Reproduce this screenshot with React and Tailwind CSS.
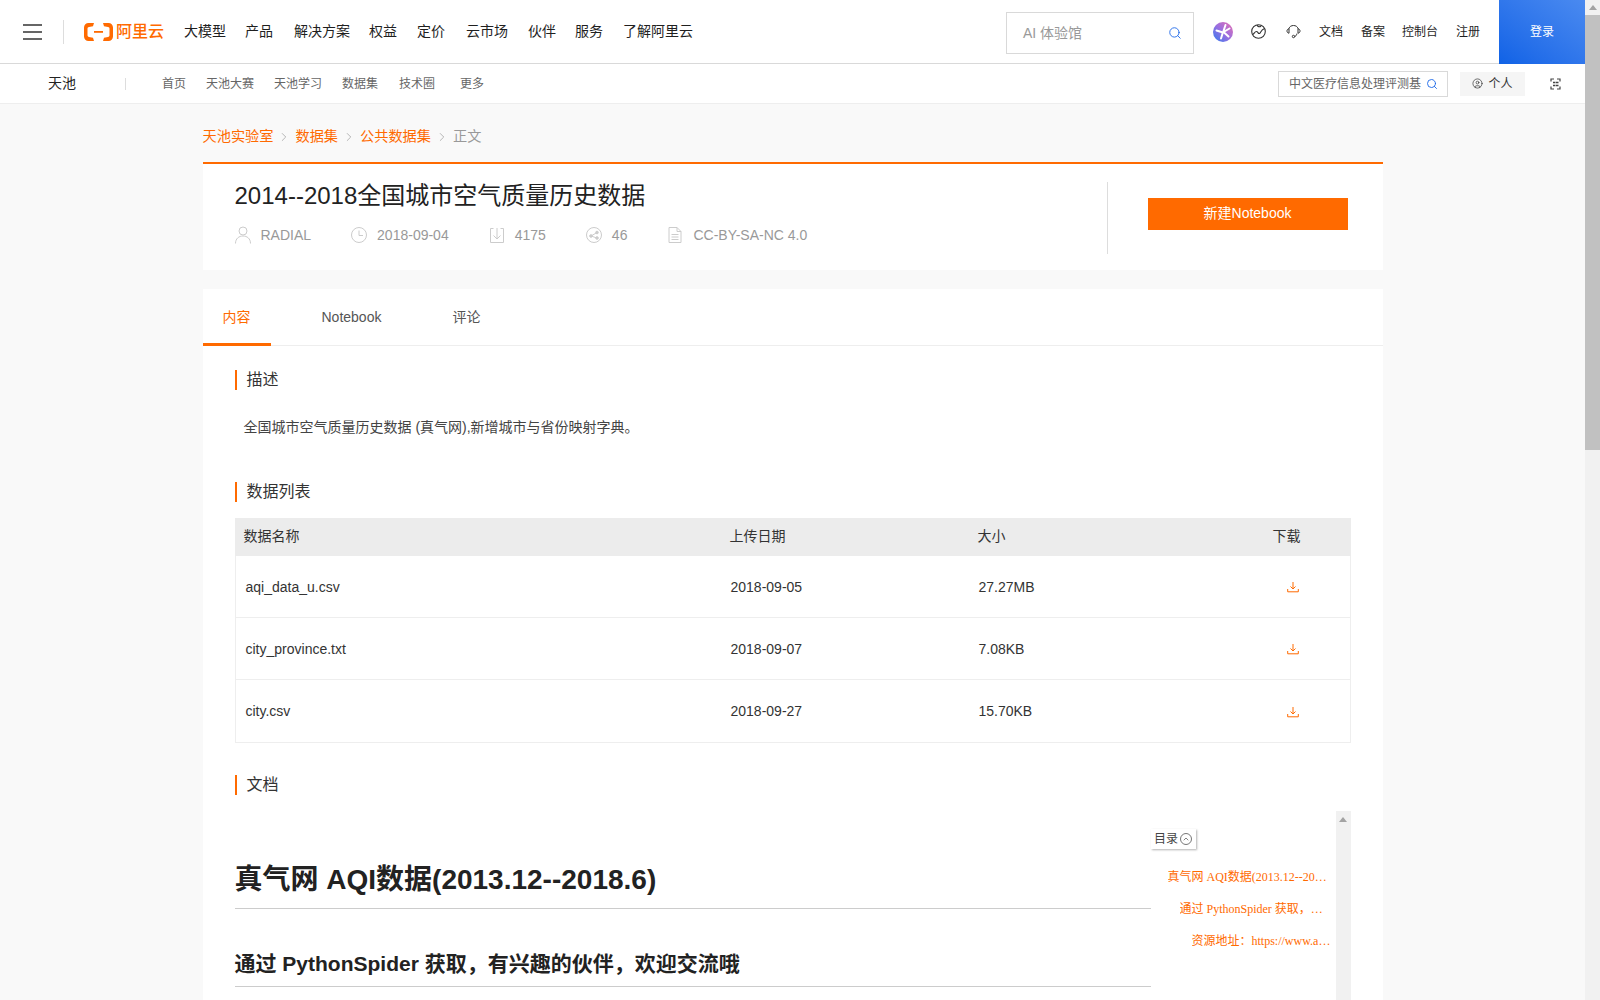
import React from 'react';
import { Search, ChevronRight, ChevronUp, CircleUser } from 'lucide-react';

const topNav = [
  { name: '大模型', cls: 'ml-[20px]' },
  { name: '产品', cls: 'ml-[19px]' },
  { name: '解决方案', cls: 'ml-[21px]' },
  { name: '权益', cls: 'ml-[19px]' },
  { name: '定价', cls: 'ml-[20px]' },
  { name: '云市场', cls: 'ml-[21px]' },
  { name: '伙伴', cls: 'ml-[20px]' },
  { name: '服务', cls: 'ml-[19px]' },
  { name: '了解阿里云', cls: 'ml-[20px]' },
];

const subNav = [
  { name: '首页', cls: 'ml-[36px]' },
  { name: '天池大赛', cls: 'ml-[20px]' },
  { name: '天池学习', cls: 'ml-[20px]' },
  { name: '数据集', cls: 'ml-[20px]' },
  { name: '技术圈', cls: 'ml-[21px]' },
  { name: '更多', cls: 'ml-[25px]' },
];

const files = [
  { name: 'aqi_data_u.csv', date: '2018-09-05', size: '27.27MB' },
  { name: 'city_province.txt', date: '2018-09-07', size: '7.08KB' },
  { name: 'city.csv', date: '2018-09-27', size: '15.70KB' },
];

function Logo() {
  return (
    <div className="flex items-center ml-[20px] w-[80px] whitespace-nowrap">
      <svg width="29" height="18" viewBox="0 0 29 18" fill="#ff6a00" className="shrink-0">
        <path d="M10 0H4.500C2 0 0 2 0 4.500V13.500C0 16 2 18 4.500 18H10L9 14.800L5 14C4 13.700 3.500 13.200 3.500 12.300V5.700C3.500 4.800 4 4.300 5 4L9 3.200Z" />
        <path d="M19 0H24.500C27 0 29 2 29 4.500V13.500C29 16 27 18 24.500 18H19L20 14.800L24 14C25 13.700 25.500 13.200 25.500 12.300V5.700C25.500 4.800 25 4.300 24 4L20 3.200Z" />
        <rect x="10" y="8" width="9" height="1.800" />
      </svg>
      <span className="ml-[3px] text-[16px] leading-none font-medium text-[#ff6a00]">阿里云</span>
    </div>
  );
}

function TopBar() {
  return (
    <header className="h-[64px] bg-white border-b border-[#d9d9d9] flex items-center text-[14px] text-[#1f1f1f]">
      <div className="ml-[23px] w-[19px] flex flex-col gap-[5px]">
        <div className="h-[2px] bg-[#666]" />
        <div className="h-[2px] bg-[#666]" />
        <div className="h-[2px] bg-[#666]" />
      </div>
      <div className="ml-[21px] w-px h-[24px] bg-[#ddd]" />
      <Logo />
      {topNav.map((item) => (
        <span key={item.name} className={item.cls}>{item.name}</span>
      ))}
      <div className="ml-auto w-[188px] h-[42px] mt-[3px] border border-[#d9d9d9] flex items-center pl-[16px] pr-[11px] text-[#999]">
        <span>AI 体验馆</span>
        <Search className="ml-auto w-[14px] h-[14px] text-[#1a66e8]" strokeWidth={1.5} />
      </div>
      <svg className="ml-[19px]" width="20" height="20" viewBox="0 0 20 20">
        <defs>
          <linearGradient id="star" x1="1" y1="0" x2="0" y2="1">
            <stop offset="0" stopColor="#e86fb0" />
            <stop offset="0.5" stopColor="#9a6fe0" />
            <stop offset="1" stopColor="#2f7bf0" />
          </linearGradient>
        </defs>
        <circle cx="10" cy="10" r="10" fill="url(#star)" />
        <path d="M12.500 3L10.500 9M3.500 8.500L10 10.500M10.500 10L16.500 6.500M10.500 10L15.500 14.500M10 10L8 16.500" stroke="#fff" strokeWidth="2" strokeLinecap="round" fill="none" />
      </svg>
      <svg className="ml-[18px]" width="15" height="15" viewBox="0 0 15 15" fill="none" stroke="#333" strokeWidth="1.100">
        <circle cx="7.500" cy="7.500" r="6.800" />
        <path d="M1.500 10.500C3 10.500 3.500 7.500 5.500 7.500C7 7.500 7 10 8.500 9.500C10 9 9.500 6 13.500 4.500M6 1C6.500 2.500 8.500 3.500 10 2" />
      </svg>
      <svg className="ml-[20px]" width="15" height="15" viewBox="0 0 15 15" fill="none" stroke="#333" strokeWidth="1">
        <path d="M3 5V4.500C3.500 2.500 5.500 1.500 7.500 1.500C9.500 1.500 11.500 2.500 12 4.500V5" />
        <path d="M3 4.800C1.500 5 1 6 1 7C1 8 1.500 9 3 9.200ZM12 4.800C13.500 5 14 6 14 7C14 8 13.500 9 12 9.200Z" />
        <path d="M11 9.500C10.500 11.500 9.500 12.500 8.500 12.500" />
        <circle cx="7.500" cy="12.500" r="1.200" />
      </svg>
      <span className="ml-[18px] text-[12px]">文档</span>
      <span className="ml-[18px] text-[12px]">备案</span>
      <span className="ml-[17px] text-[12px]">控制台</span>
      <span className="ml-[18px] text-[12px]">注册</span>
      <div className="ml-[19px] w-[86px] h-[64px] self-start bg-gradient-to-tr from-[#0f62e6] to-[#4a8af0] text-white text-[12px] flex items-center justify-center">登录</div>
    </header>
  );
}

function SubBar() {
  return (
    <div className="h-[40px] bg-white border-b border-[#eee] flex items-center text-[12px] text-[#666]">
      <span className="ml-[48px] text-[14px] text-[#222]">天池</span>
      <div className="ml-[49px] w-px h-[12px] bg-[#ddd]" />
      {subNav.map((item) => (
        <span key={item.name} className={item.cls}>{item.name}</span>
      ))}
      <div className="ml-auto w-[170px] h-[26px] border border-[#d9d9d9] flex items-center pl-[10px] pr-[9px]">
        <span className="w-[132px] whitespace-nowrap overflow-hidden">中文医疗信息处理评测基</span>
        <Search className="ml-auto w-[12px] h-[12px] text-[#1a66e8] shrink-0" strokeWidth={1.8} />
      </div>
      <div className="ml-[12px] w-[65px] h-[24px] bg-[#f5f5f5] flex items-center justify-center gap-[5px] text-[#333]">
        <CircleUser className="w-[11px] h-[11px]" strokeWidth={1.5} />
        <span>个人</span>
      </div>
      <svg className="ml-[25px] mr-[24px]" width="11" height="12" viewBox="0 0 11 12" fill="none" stroke="#444" strokeWidth="1.200">
        <path d="M1 3.500V1H4M7 1H10V3.500M10 8.500V11H7M4 11H1V8.500" />
        <path d="M3 4.500H5.500M6 4.500H8.500M3 7.500H5.500M6 7.500H8.500" strokeWidth="1.500" />
      </svg>
    </div>
  );
}

function Crumbs() {
  const sep = <ChevronRight className="mx-[4px] w-[14px] h-[14px] text-[#999]" strokeWidth={1.2} />;
  return (
    <div className="h-[58px] pt-[8px] flex items-center text-[14.2px] text-[#ff6a00]">
      <span>天池实验室</span>
      {sep}
      <span>数据集</span>
      {sep}
      <span>公共数据集</span>
      {sep}
      <span className="text-[#999]">正文</span>
    </div>
  );
}

function UserIcon() {
  return (
    <svg width="16" height="18" viewBox="0 0 16 18" fill="none" stroke="#ccc" strokeWidth="1">
      <circle cx="8" cy="5" r="4" />
      <path d="M0.500 17.500C0.500 12.500 4 10 8 10C12 10 15.500 12.500 15.500 17.500" />
    </svg>
  );
}

function ClockIcon() {
  return (
    <svg width="16" height="16" viewBox="0 0 16 16" fill="none" stroke="#ccc" strokeWidth="1">
      <circle cx="8" cy="8" r="7.500" />
      <path d="M8 3.500V8.500H12" />
    </svg>
  );
}

function BoxDownIcon() {
  return (
    <svg width="16" height="16" viewBox="0 0 16 16" fill="none" stroke="#ccc" strokeWidth="1">
      <path d="M4.500 1.500H1.500V15.500H14.500V1.500H11.500" />
      <path d="M8 1V12M4.500 8.500L8 12L11.500 8.500" />
    </svg>
  );
}

function ShareIcon() {
  return (
    <svg width="16" height="16" viewBox="0 0 16 16" fill="none" stroke="#ccc" strokeWidth="1">
      <circle cx="8" cy="8" r="7.500" />
      <circle cx="5" cy="9" r="1.300" fill="#ccc" />
      <circle cx="11" cy="5.500" r="1.300" fill="#ccc" />
      <circle cx="11" cy="11" r="1.300" fill="#ccc" />
      <path d="M5 9L11 5.500M5 9L11 11" />
    </svg>
  );
}

function DocIcon() {
  return (
    <svg width="16" height="16" viewBox="0 0 16 16" fill="none" stroke="#ccc" strokeWidth="1">
      <path d="M2 0.500H10L14 4.500V15.500H2Z" />
      <path d="M10 0.500V4.500H14M4.500 7.500H11.500M4.500 10H11.500M4.500 12.500H11.500" />
    </svg>
  );
}

function MetaItem({ icon, text, cls }) {
  return (
    <div className={`flex items-center gap-[10px] ${cls}`}>
      {icon}
      <span>{text}</span>
    </div>
  );
}

function TitleCard() {
  return (
    <div className="h-[108px] bg-white border-t-2 border-[#ff6a00] flex">
      <div className="ml-[32px] w-[872px] h-[71px] mt-[18px]">
        <h1 className="text-[24px] leading-[28px] text-[#222] font-normal">2014--2018全国城市空气质量历史数据</h1>
        <div className="mt-[15px] flex items-center text-[14px] leading-[20px] text-[#999]">
          <MetaItem icon={<UserIcon />} text="RADIAL" cls="" />
          <MetaItem icon={<ClockIcon />} text="2018-09-04" cls="ml-[40px]" />
          <MetaItem icon={<BoxDownIcon />} text="4175" cls="ml-[40px]" />
          <MetaItem icon={<ShareIcon />} text="46" cls="ml-[40px]" />
          <MetaItem icon={<DocIcon />} text="CC-BY-SA-NC 4.0" cls="ml-[40px]" />
        </div>
      </div>
      <div className="mt-[18px] w-px h-[72px] bg-[#ddd]" />
      <button className="ml-[40px] mt-[34px] w-[200px] h-[32px] pb-px bg-[#ff6a00] text-white text-[14px]">新建Notebook</button>
    </div>
  );
}

function Tabs() {
  return (
    <div className="h-[57px] border-b border-[#eee] flex text-[14px] text-[#555]">
      <div className="w-[68px] h-[57px] border-b-[3px] border-[#ff6a00] text-[#ff6a00] pl-[20px] pt-[18px] leading-[20px]">内容</div>
      <div className="ml-[51px] pt-[18px] leading-[20px]">Notebook</div>
      <div className="ml-[71px] pt-[18px] leading-[20px]">评论</div>
    </div>
  );
}

function SectionTitle({ children, cls }) {
  return (
    <div className={`flex items-center h-[20px] border-l-2 border-[#ff6a00] pl-[10px] text-[16px] text-[#333] ${cls}`}>
      {children}
    </div>
  );
}

function DownloadIcon() {
  return (
    <svg width="12" height="12" viewBox="0 0 12 12" fill="none" stroke="#ff6a00" strokeWidth="1">
      <path d="M6 1V8M3.500 5.500L6 8L8.500 5.500" />
      <path d="M0.700 8V10.800H11.300V8" />
    </svg>
  );
}

function FileTable() {
  return (
    <div className="mt-[16px] text-[14px] text-[#333]">
      <div className="h-[38px] pb-px bg-[#ececec] grid grid-cols-[486px_248px_295px_79px] items-center pl-[9px]">
        <span>数据名称</span>
        <span>上传日期</span>
        <span>大小</span>
        <span>下载</span>
      </div>
      <div className="border border-t-0 border-[#eee]">
        {files.map((f, i) => (
          <div key={f.name} className={`h-[62px] pt-px grid grid-cols-[485px_248px_308px_1fr] items-center pl-[10px] ${i < 2 ? 'border-b border-[#eee]' : ''}`}>
            <span>{f.name}</span>
            <span>{f.date}</span>
            <span>{f.size}</span>
            <DownloadIcon />
          </div>
        ))}
      </div>
    </div>
  );
}

function DocPanel() {
  return (
    <div className="mt-[16px] flex h-[400px] text-[#222]">
      <div className="w-[916px]">
        <h1 className="mt-[50px] pb-[10px] border-b border-[#ccc] text-[28px] leading-[37px] font-bold">真气网 AQI数据(2013.12--2018.6)</h1>
        <h2 className="mt-[39px] pb-[6px] border-b border-[#ccc] text-[21px] leading-[32px] font-bold">通过 PythonSpider 获取，有兴趣的伙伴，欢迎交流哦</h2>
      </div>
      <div className="w-[185px] text-[12px] leading-[16px] font-['Liberation_Serif','Noto_Sans_CJK_SC',serif] text-[#ff6a00]">
        <div className="mt-[18px] w-[45px] h-[20px] bg-white shadow-[1px_1px_2px_rgba(0,0,0,0.3)] flex items-center justify-center gap-[2px] text-[#444] font-['Liberation_Sans','Noto_Sans_CJK_SC',sans-serif]">
          <span>目录</span>
          <span className="w-[12px] h-[12px] rounded-full border border-[#777] flex items-center justify-center">
            <ChevronUp className="w-[8px] h-[8px]" strokeWidth={2} />
          </span>
        </div>
        <div className="mt-[20px] ml-[17px] w-[163px] truncate">真气网 AQI数据(2013.12--2018.6)</div>
        <div className="mt-[16px] ml-[29px] w-[146px] truncate">通过 PythonSpider 获取，有兴趣的伙伴</div>
        <div className="mt-[16px] ml-[41px] w-[139px] truncate">资源地址：https://www.aqistudy.cn</div>
      </div>
      <div className="w-[15px] bg-[#f1f1f1] flex justify-center pt-[6px]">
        <div className="w-0 h-0 border-x-[4px] border-x-transparent border-b-[5px] border-b-[#a3a3a3]" />
      </div>
    </div>
  );
}

function ContentCard() {
  return (
    <div className="mt-[19px] bg-white">
      <Tabs />
      <div className="px-[32px] pt-[24px]">
        <SectionTitle>描述</SectionTitle>
        <p className="mt-[27px] ml-[9px] text-[14px] leading-[20px] text-[#444]">全国城市空气质量历史数据 (真气网),新增城市与省份映射字典。</p>
        <SectionTitle cls="mt-[45px]">数据列表</SectionTitle>
        <FileTable />
        <SectionTitle cls="mt-[32px]">文档</SectionTitle>
        <DocPanel />
      </div>
    </div>
  );
}

function PageScrollbar() {
  return (
    <div className="w-[15px] shrink-0 bg-[#f1f1f1] flex flex-col">
      <div className="h-[15px] flex items-center justify-center">
        <div className="w-0 h-0 border-x-[4px] border-x-transparent border-b-[5px] border-b-[#a3a3a3]" />
      </div>
      <div className="h-[435px] bg-[#c1c1c1]" />
    </div>
  );
}

export default function App() {
  return (
    <div className="h-screen overflow-hidden flex bg-[#f9f9f9] font-['Liberation_Sans','Noto_Sans_CJK_SC',sans-serif]">
      <div className="flex-1 min-w-0">
        <TopBar />
        <SubBar />
        <div className="w-[1180px] mx-auto">
          <Crumbs />
          <TitleCard />
          <ContentCard />
        </div>
      </div>
      <PageScrollbar />
    </div>
  );
}
